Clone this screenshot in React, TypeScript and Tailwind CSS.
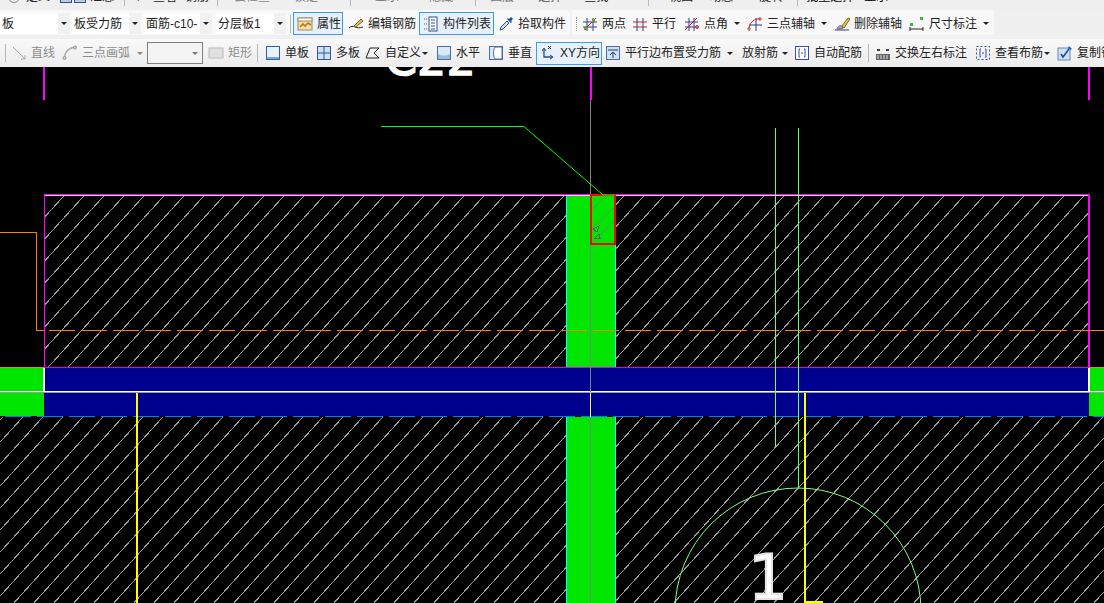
import type { ReactNode } from "react";

const Ico = ({ children }: { children: ReactNode }) => (
  <svg width="16" height="16" viewBox="0 0 16 16" className="shrink-0" fill="none">
    {children}
  </svg>
);

const Arrow = ({ className = "" }: { className?: string }) => (
  <span className={`w-0 h-0 border-x-[3px] border-x-transparent border-t-[3px] border-t-[#222] shrink-0 ${className}`} />
);

const Sep = ({ className = "" }: { className?: string }) => (
  <span className={`w-px h-[18px] bg-[#b8b8b8] shrink-0 ${className}`} />
);

const Combo = ({ label, className }: { label: string; className: string }) => (
  <div className={`h-[21px] bg-white flex items-center justify-between shrink-0 ${className}`}>
    <span className="pl-[2px] w-[56px] overflow-hidden whitespace-nowrap">{label}</span>
    <span className="w-[12px] h-full bg-[#f1f1f1] flex items-center justify-center">
      <Arrow />
    </span>
  </div>
);

const Tool = ({
  icon,
  label,
  className,
  gray,
  active,
}: {
  icon: ReactNode;
  label: string;
  className: string;
  gray?: boolean;
  active?: boolean;
}) => (
  <div
    className={`flex items-center gap-[4px] shrink-0 whitespace-nowrap ${gray ? "text-[#8c8c8c]" : ""} ${
      active ? "h-[23px] pl-[3px] border border-[#3c9bf0] bg-[#e6f1fb]" : "h-[22px]"
    } ${className}`}
  >
    {icon}
    <span>{label}</span>
  </div>
);

const TopRow = () => (
  <div className="h-[10px] overflow-hidden bg-[#efefef] shrink-0">
    <div className="flex items-center h-[12px] -mt-[9px] text-[12px] whitespace-nowrap text-[#222]">
      <span className="ml-[8px] w-[12px] h-[12px] rounded-full border border-[#888]" />
      <span className="ml-[6px]">定义</span>
      <span className="ml-[10px] w-[12px] h-[12px] border border-[#2d4f8f] bg-[#bcd]" />
      <span className="ml-[2px] w-[12px] h-[12px] border border-[#2d4f8f] bg-[#bcd]" />
      <span className="ml-[4px]">汇总</span>
      <Sep className="ml-[10px]" />
      <span className="ml-[10px] text-[#3a5a9a]">↓</span>
      <span className="ml-[12px]">查看</span>
      <span className="ml-[8px]">钢筋</span>
      <Sep className="ml-[8px]" />
      <span className="ml-[16px] text-[#888]">云检查</span>
      <span className="ml-[24px] text-[#888]">锁定</span>
      <Sep className="ml-[32px]" />
      <span className="ml-[24px] text-[#777]">显示</span>
      <span className="ml-[30px] text-[#777]">隐藏</span>
      <Sep className="ml-[22px]" />
      <span className="ml-[14px] text-[#777]">图层</span>
      <span className="ml-[24px] text-[#555]">选择</span>
      <span className="ml-[22px]">查找</span>
      <Sep className="ml-[40px]" />
      <span className="ml-[20px]">视图</span>
      <span className="ml-[16px]">动态</span>
      <span className="ml-[26px]">旋转</span>
      <Sep className="ml-[14px]" />
      <span className="ml-[8px] text-black">批量选择</span>
      <span className="ml-[10px] text-black">显示</span>
    </div>
  </div>
);

const ToolbarOne = () => (
  <div className="flex h-[25px] mb-[4px] shrink-0 items-center text-[12px] text-[#222]">
    <div className="w-[570px] h-full pt-[2px] bg-[#f8f8f8] flex items-center rounded-r-[3px]">
      <Combo label="板" className="w-[70px]" />
      <Combo label="板受力筋" className="ml-[2px] w-[69px]" />
      <Combo label="面筋-c10-" className="ml-[3px] w-[68px]" />
      <Combo label="分层板1" className="ml-[4px] w-[70px]" />
      <Sep className="ml-[4px]" />
      <Tool
        active
        className="ml-[2px] w-[50px]"
        label="属性"
        icon={
          <Ico>
            <rect x="1" y="2" width="14" height="12" fill="#f6dfa8" stroke="#a08a60" />
            <rect x="1" y="2" width="14" height="3" fill="#fff" stroke="#a08a60" />
            <path d="M3 11l3-3 2 2 3-3 3 2" stroke="#b7791f" strokeWidth="1.6" />
          </Ico>
        }
      />
      <Tool
        className="ml-[5px] w-[68px]"
        label="编辑钢筋"
        icon={
          <Ico>
            <path d="M1 12c2-2 4-2 6-1s5 1 8 0" stroke="#222" />
            <path d="M6 10l7-7 2 2-7 6z" fill="#e5b94e" stroke="#8a6a20" />
          </Ico>
        }
      />
      <Tool
        active
        className="ml-[3px] w-[75px]"
        label="构件列表"
        icon={
          <Ico>
            <path d="M1 3h3M1 8h3M1 13h3" stroke="#555" strokeDasharray="1 1" />
            <rect x="6" y="1" width="8" height="14" fill="#fff" stroke="#2d4f8f" />
            <path d="M8 4h4M8 7h4M8 10h4M8 13h4" stroke="#2d4f8f" />
          </Ico>
        }
      />
      <Tool
        className="ml-[4px] w-[68px]"
        label="拾取构件"
        icon={
          <Ico>
            <path d="M2 14l1-3 6-6 2 2-6 6z" fill="#cfe3f7" stroke="#2d4f8f" />
            <path d="M9 3l4 4 1-1-1-1 2-2-2-2-2 2-1-1z" fill="#1f4f96" />
          </Ico>
        }
      />
    </div>
    <div className="w-[422px] h-full pt-[2px] ml-[2px] bg-[#f8f8f8] flex items-center">
      <span className="ml-[4px] w-px h-[14px] border-l border-dotted border-[#999] shrink-0" />
      <Tool
        className="ml-[5px] w-[45px]"
        label="两点"
        icon={
          <Ico>
            <path d="M5 2v13M11 2v13M1 6h14M1 11h14" stroke="#2f3f8f" />
            <path d="M2 14L14 2" stroke="#e02020" />
            <rect x="2" y="11" width="3" height="3" fill="#6a9a30" />
            <rect x="10" y="3" width="3" height="3" fill="#6a9a30" />
          </Ico>
        }
      />
      <Tool
        className="ml-[5px] w-[46px]"
        label="平行"
        icon={
          <Ico>
            <path d="M5 2v13M11 2v13" stroke="#2f3f8f" />
            <path d="M1 6h14M1 11h14" stroke="#c02030" />
          </Ico>
        }
      />
      <Tool
        className="ml-[6px] w-[47px]"
        label="点角"
        icon={
          <Ico>
            <path d="M5 2v13M10 2v13M1 6h13M1 11h13" stroke="#2f3f8f" />
            <path d="M1 14L13 2" stroke="#e02020" />
            <circle cx="13" cy="11" r="1.5" stroke="#e02020" />
          </Ico>
        }
      />
      <Arrow className="ml-[3px]" />
      <Tool
        className="ml-[7px] w-[71px]"
        label="三点辅轴"
        icon={
          <Ico>
            <path d="M9 2v13M2 9h13" stroke="#2f3f8f" />
            <path d="M2 12C3 6 8 2 13 3" stroke="#e02020" />
            <circle cx="2" cy="13" r="1.2" stroke="#e02020" />
            <circle cx="13" cy="3" r="1.2" stroke="#e02020" />
          </Ico>
        }
      />
      <Arrow className="ml-[3px]" />
      <Tool
        className="ml-[7px] w-[71px]"
        label="删除辅轴"
        icon={
          <Ico>
            <path d="M1 14h14" stroke="#2f3f8f" />
            <path d="M7 11l7-9 2 1-6 9z" fill="#e5c04e" stroke="#8a6a20" />
            <path d="M3 13c1-3 3-4 5-3l1 2-2 1z" fill="#b6a0c8" stroke="#666" />
          </Ico>
        }
      />
      <Tool
        className="ml-[4px] w-[70px]"
        label="尺寸标注"
        icon={
          <Ico>
            <path d="M1 11v4M14 11v4M1 13h13" stroke="#222" />
            <rect x="1" y="7" width="3" height="3" fill="#44b04a" />
            <rect x="11" y="1" width="3" height="3" fill="#44b04a" />
          </Ico>
        }
      />
      <Arrow className="ml-[4px]" />
    </div>
  </div>
);

const ToolbarTwo = () => (
  <div className="flex h-[28px] shrink-0 items-center text-[12px] text-[#222] bg-gradient-to-b from-[#f9f9f9] to-[#ececec] overflow-hidden">
    <Sep className="ml-[5px]" />
    <Tool
      gray
      className="ml-[5px] w-[45px]"
      label="直线"
      icon={
        <Ico>
          <path d="M2 2l12 12M14 10v4h-4" stroke="#aaa" />
        </Ico>
      }
    />
    <Tool
      gray
      className="ml-[6px] w-[69px]"
      label="三点画弧"
      icon={
        <Ico>
          <path d="M2 13C3 7 7 3 13 2" stroke="#aaa" strokeWidth="1.5" />
          <circle cx="2.5" cy="13" r="1.5" fill="#ccc" stroke="#999" />
          <circle cx="13" cy="2.5" r="1.5" fill="#ccc" stroke="#999" />
        </Ico>
      }
    />
    <Arrow className="ml-[6px] !border-t-[#888]" />
    <div className="ml-[4px] w-[56px] h-[22px] border border-[#808080] bg-[#f4f4f4] flex items-center justify-end pr-[4px] shrink-0">
      <Arrow className="!border-t-[#777]" />
    </div>
    <Tool
      gray
      className="ml-[5px] w-[44px]"
      label="矩形"
      icon={
        <Ico>
          <rect x="1" y="3" width="14" height="10" fill="#e0e0e0" stroke="#bbb" />
        </Ico>
      }
    />
    <Sep className="ml-[5px]" />
    <Tool
      className="ml-[7px] w-[44px]"
      label="单板"
      icon={
        <Ico>
          <rect x="1.5" y="1.5" width="13" height="13" fill="#eaf2fb" stroke="#2d5fb0" />
          <path d="M2 13h12" stroke="#7aa5dc" strokeWidth="2" />
        </Ico>
      }
    />
    <Tool
      className="ml-[7px] w-[44px]"
      label="多板"
      icon={
        <Ico>
          <rect x="1.5" y="1.5" width="13" height="13" fill="#cfe0f2" stroke="#335a8a" />
          <path d="M8 2v12M2 8h12" stroke="#335a8a" />
        </Ico>
      }
    />
    <Tool
      className="ml-[5px] w-[56px]"
      label="自定义"
      icon={
        <Ico>
          <path d="M1 13L5 3h9l-5 5 5 5z" stroke="#222" />
        </Ico>
      }
    />
    <Arrow className="ml-[1px]" />
    <Tool
      className="ml-[8px] w-[44px]"
      label="水平"
      icon={
        <Ico>
          <rect x="1.5" y="1.5" width="13" height="13" fill="#dce8f5" stroke="#4a6f9c" />
          <path d="M2 9c4 2 8 2 12 0v5H2z" fill="#9dbbdc" />
        </Ico>
      }
    />
    <Tool
      className="ml-[8px] w-[44px]"
      label="垂直"
      icon={
        <Ico>
          <rect x="1.5" y="1.5" width="13" height="13" fill="#dce8f5" stroke="#4a6f9c" />
          <path d="M7 2C5 6 5 10 7 14h7V2z" fill="#fff" stroke="#4a6f9c" />
        </Ico>
      }
    />
    <Tool
      active
      className="ml-[4px] w-[66px]"
      label="XY方向"
      icon={
        <Ico>
          <path d="M4 4v8h8" stroke="#1f4f96" strokeWidth="1.3" />
          <path d="M2 6l2-3 2 3M10 10l3 2-3 2" stroke="#1f4f96" />
          <path d="M8 1l3 3M11 1l-3 3" stroke="#222" />
        </Ico>
      }
    />
    <Tool
      className="ml-[3px] w-[116px]"
      label="平行边布置受力筋"
      icon={
        <Ico>
          <rect x="1.5" y="1.5" width="13" height="13" fill="#cfe0f2" stroke="#4a6f9c" />
          <path d="M3 5h10M8 13V7M5 10l3-3 3 3" stroke="#223a66" />
        </Ico>
      }
    />
    <Arrow className="ml-[6px]" />
    <span className="ml-[9px] w-[38px] shrink-0">放射筋</span>
    <Arrow className="ml-[2px]" />
    <Tool
      className="ml-[6px] w-[68px]"
      label="自动配筋"
      icon={
        <Ico>
          <rect x="1.5" y="1.5" width="13" height="13" fill="#fff" stroke="#3a4fa8" />
          <path d="M6 4H5v8h1M10 4h1v8h-1M7 8h2" stroke="#3a4fa8" />
        </Ico>
      }
    />
    <Sep className="ml-[6px]" />
    <Tool
      className="ml-[6px] w-[92px]"
      label="交换左右标注"
      icon={
        <Ico>
          <rect x="1" y="9" width="14" height="6" fill="#666" />
          <path d="M3 10v4M6 10v4M9 10v4M12 10v4" stroke="#ddd" />
          <path d="M2 5h3M11 5h3" stroke="#345" strokeWidth="2" />
        </Ico>
      }
    />
    <Tool
      className="ml-[8px] w-[68px]"
      label="查看布筋"
      icon={
        <Ico>
          <rect x="1.5" y="1.5" width="13" height="13" stroke="#3a4fa8" strokeDasharray="2 2" />
          <path d="M6 4H5v8h1M10 4h1v8h-1M7 8h2" stroke="#3a4fa8" />
        </Ico>
      }
    />
    <Arrow className="ml-[1px]" />
    <Tool
      className="ml-[7px] w-[60px]"
      label="复制钢筋"
      icon={
        <Ico>
          <rect x="1" y="3" width="12" height="12" fill="#cfe0f2" stroke="#6a8ab0" />
          <path d="M4 9l2 3 6-8" stroke="#1f4f96" strokeWidth="1.6" />
          <path d="M12 1l3 3-2 1-2-2z" fill="#1f6fc0" />
        </Ico>
      }
    />
  </div>
);

const Drawing = () => (
  <svg viewBox="0 67 1104 536" className="block w-full flex-1 bg-black" shapeRendering="crispEdges">
    <defs>
      <pattern id="hatch" width="20" height="22" patternUnits="userSpaceOnUse" x="2" y="0">
        <path d="M0 22L20 0" stroke="#9c9c9c" strokeWidth="1" shapeRendering="crispEdges" />
      </pattern>
    </defs>

    <text
      x="385"
      y="75"
      fill="#fff"
      stroke="#fff"
      strokeWidth="1.5"
      fontSize="46"
      fontFamily="'DejaVu Sans', sans-serif"
      shapeRendering="auto"
    >
      C22
    </text>

    {/* hatched slabs */}
    <rect x="45" y="196" width="1043" height="171" fill="url(#hatch)" />
    <rect x="0" y="417" width="1104" height="186" fill="url(#hatch)" />

    {/* column */}
    <rect x="567" y="196" width="48" height="171" fill="#00e600" />
    <rect x="567" y="417" width="48" height="186" fill="#00e600" />
    <path d="M566.5 196v171M615.5 244v123M566.5 417v186M615.5 417v186" stroke="#00ffff" />

    {/* beam */}
    <rect x="0" y="367" width="44" height="49" fill="#00e600" />
    <rect x="1089" y="367" width="15" height="49" fill="#00e600" />
    <rect x="45" y="367" width="1044" height="24" fill="#00008f" />
    <rect x="44" y="393" width="1045" height="23" fill="#00008f" />
    <rect x="567" y="367" width="48" height="49" fill="#00008f" />
    <path d="M0 391.5h1104" stroke="#fff" />
    <path d="M0 392.5h1104" stroke="#999" />
    <path d="M0 367.5h44M1089 367.5h15" stroke="#ff8000" />
    <path d="M44 367.5h1045" stroke="#e000e0" />
    <rect x="43" y="368" width="2" height="23" fill="#fff" />
    <rect x="1088" y="368" width="2" height="23" fill="#fff" />
    <path d="M5 416.5H1104" stroke="#0080f0" strokeDasharray="26 6" />

    {/* slab outline and ticks */}
    <rect x="44" y="194" width="1046" height="1" fill="#ff00ff" />
    <rect x="44" y="195" width="1046" height="1" fill="#ffd0ff" />
    <rect x="44" y="195" width="1" height="172" fill="#ff00ff" />
    <rect x="1088" y="195" width="2" height="172" fill="#ff00ff" />
    <rect x="43" y="67" width="2" height="33" fill="#ff00ff" />
    <rect x="590" y="67" width="2" height="33" fill="#ff00ff" />
    <rect x="1088" y="67" width="2" height="33" fill="#ff00ff" />
    <rect x="590" y="100" width="1" height="503" fill="#808080" />
    <rect x="590" y="392" width="1" height="25" fill="#e8e8e8" />

    {/* selected corner */}
    <path d="M591 229l24-22M591 244l24-24M606 196l-15 14" stroke="#6a8a6a" shapeRendering="auto" />
    <path d="M593 229l6-3-2 6zM595 238l4-4 1 4z" fill="none" stroke="#606060" />
    <rect x="591" y="195" width="24" height="49" fill="none" stroke="#ff0000" strokeWidth="1.5" />

    {/* leader */}
    <path d="M381 126.5h143L603 195h12" fill="none" stroke="#00ff00" shapeRendering="auto" />

    {/* orange axis */}
    <path d="M0 232.5h36.5V330.5H44" fill="none" stroke="#ff8000" />
    <path d="M49 330.5H1099" stroke="#ff8000" strokeDasharray="26 6" />
    <path d="M1099 330.5H1104" stroke="#ff8000" />

    {/* axis lines, circle */}
    <rect x="775" y="128" width="1" height="319" fill="#66ff66" />
    <rect x="798" y="128" width="1" height="360" fill="#66ff66" />
    <circle cx="798" cy="611" r="123" fill="none" stroke="#80ff80" shapeRendering="auto" />

    {/* yellow rebar */}
    <rect x="136" y="393" width="2" height="210" fill="#ffff00" />
    <rect x="804" y="393" width="2" height="210" fill="#ffff00" />
    <rect x="805" y="601" width="18" height="2" fill="#ffff00" />

    <text
      x="768"
      y="599"
      textAnchor="middle"
      fill="#fff"
      stroke="#e4e4e4"
      strokeWidth="2"
      fontSize="62"
      fontFamily="'DejaVu Sans', sans-serif"
      shapeRendering="auto"
    >
      1
    </text>
  </svg>
);

export default function App() {
  return (
    <div className="w-[1104px] h-[603px] overflow-hidden flex flex-col bg-[#f0f0f0] font-['Liberation_Sans','Noto_Sans_CJK_SC',sans-serif]">
      <TopRow />
      <ToolbarOne />
      <ToolbarTwo />
      <Drawing />
    </div>
  );
}
